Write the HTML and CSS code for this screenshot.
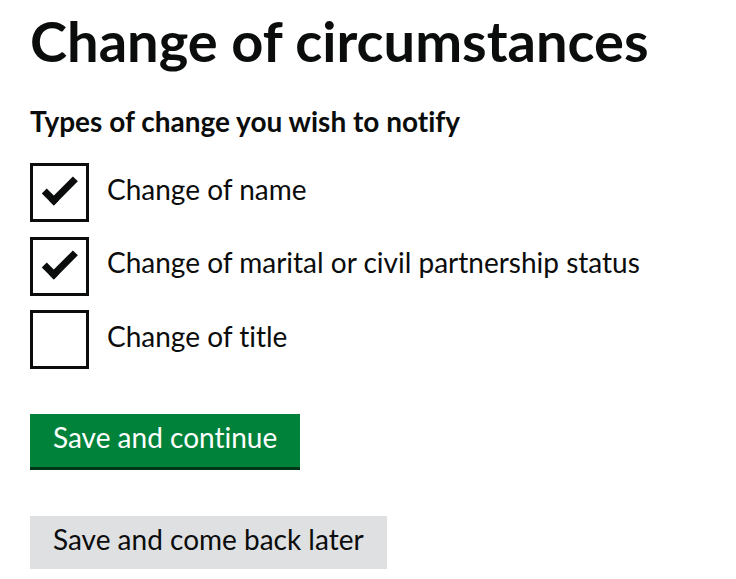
FILE: index.html
```
<!DOCTYPE html>
<html lang="en">
<head>
<meta charset="utf-8">
<title>Change of circumstances</title>
<link rel="stylesheet" href="styles.css">
</head>
<body>
<main class="page">
  <h1 class="heading">Change of circumstances</h1>
  <fieldset class="fieldset">
    <legend class="legend">Types of change you wish to notify</legend>
    <div class="checkboxes">
      <div class="item">
        <span class="box checked"></span>
        <span class="label">Change of name</span>
      </div>
      <div class="item">
        <span class="box checked"></span>
        <span class="label">Change of marital or civil partnership status</span>
      </div>
      <div class="item">
        <span class="box"></span>
        <span class="label">Change of title</span>
      </div>
    </div>
  </fieldset>
  <div class="actions">
    <button class="button primary" type="button">Save and continue</button>
    <button class="button secondary" type="button">Save and come back later</button>
  </div>
</main>
</body>
</html>
```
FILE: styles.css
```
html, body {
  margin: 0;
  padding: 0;
  background: #ffffff;
}

body {
  font-family: Lato, "Noto Sans", sans-serif;
  font-variant-ligatures: none;
  font-feature-settings: "liga" 0, "clig" 0;
  color: #0b0c0c;
}

.page {
  padding: 0 30px;
}

.heading {
  margin: 11px 0 0;
  font-size: 56px;
  line-height: 60px;
  font-weight: 700;
  white-space: nowrap;
}

.fieldset {
  margin: 32px 0 0;
  padding: 0;
  border: 0;
  min-width: 0;
}

.legend {
  display: block;
  padding: 0;
  font-size: 28px;
  line-height: 36px;
  font-weight: 700;
  margin-bottom: 24px;
}

.checkboxes {
  display: flex;
  flex-direction: column;
  gap: 14.5px;
}

.item {
  display: flex;
  align-items: flex-start;
  gap: 18px;
  height: 59px;
}

.box {
  position: relative;
  flex: none;
  box-sizing: border-box;
  width: 59px;
  height: 59px;
  border: 3px solid #0b0c0c;
  background: #ffffff;
}

.box.checked::after {
  content: "";
  position: absolute;
  left: 10px;
  top: 13px;
  width: 26.5px;
  height: 10.3px;
  border: solid #0b0c0c;
  border-width: 0 0 7.35px 7.35px;
  border-top-color: transparent;
  transform: rotate(-45deg);
}

.label {
  padding-top: 7.5px;
  font-size: 28px;
  line-height: 36px;
  font-weight: 400;
  white-space: nowrap;
}

.actions {
  display: flex;
  flex-direction: column;
  align-items: flex-start;
  gap: 49px;
  margin-top: 44.5px;
}

.button {
  display: inline-block;
  margin: 0;
  border: 0;
  border-radius: 0;
  padding: 5px 23px 12px;
  font-family: Lato, "Noto Sans", sans-serif;
  font-variant-ligatures: none;
  font-size: 28px;
  line-height: 36px;
  font-weight: 400;
  cursor: pointer;
}

.primary {
  background: #00823b;
  color: #ffffff;
  box-shadow: 0 3px 0 #003618;
}

.secondary {
  background: #dee0e2;
  color: #0b0c0c;
  box-shadow: 0 3px 0 #b1b4b6;
}
```
